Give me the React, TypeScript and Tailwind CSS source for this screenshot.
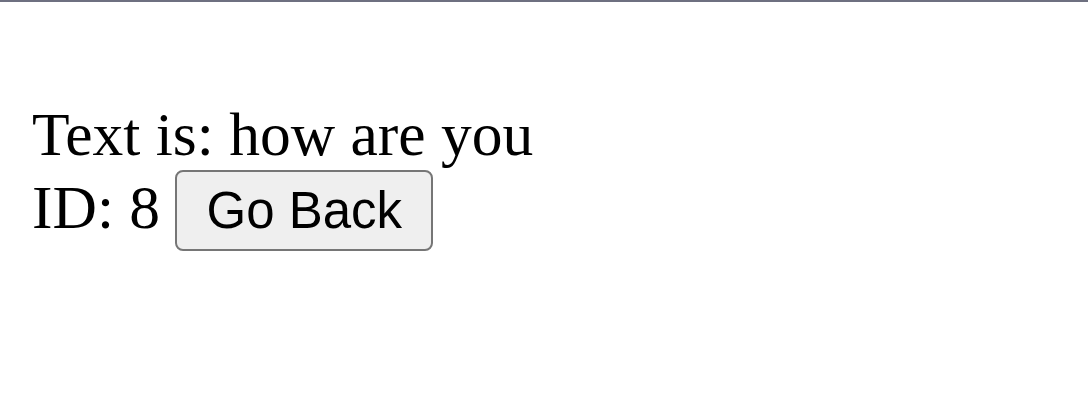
export default function App() {
  return (
    <div className="min-h-[403px] bg-white border-t-2 border-[#6e7080]">
      <div className="pl-[32px] pt-[97px] text-[61.5px] leading-[normal] text-black font-['Liberation_Serif','Times_New_Roman',serif]">
        <div>Text is: how are you</div>
        <div>
          ID: 8{" "}
          <button className="bg-[#efefef] border-2 border-[#767676] rounded-[8px] px-[29px] py-[9px] text-[51px] leading-[normal] text-black align-baseline font-['Liberation_Sans',Arial,sans-serif]">
            Go Back
          </button>
        </div>
      </div>
    </div>
  );
}
